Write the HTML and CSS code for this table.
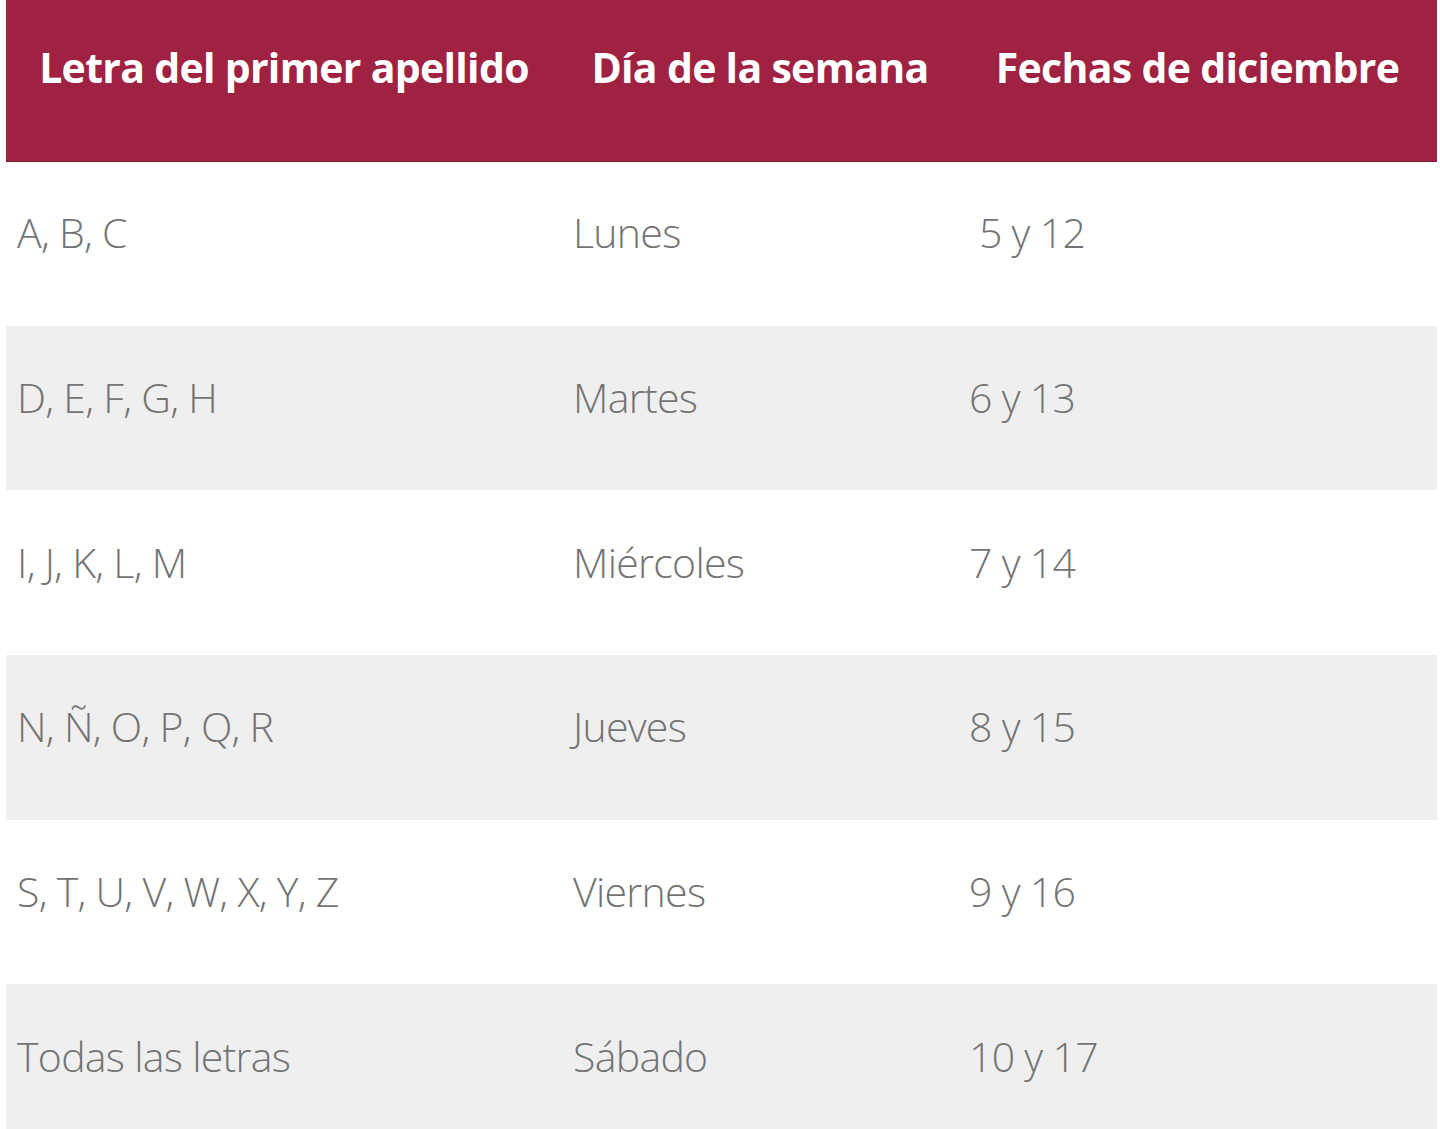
FILE: index.html
```html
<!DOCTYPE html>
<html lang="es">
<head>
<meta charset="utf-8">
<title>Calendario por apellido</title>
<link rel="stylesheet" href="styles.css">
</head>
<body>
<table class="schedule">
  <colgroup>
    <col class="c1"><col class="c2"><col class="c3">
  </colgroup>
  <thead>
    <tr>
      <th><span class="txt">Letra del primer apellido</span></th>
      <th><span class="txt">Día de la semana</span></th>
      <th><span class="txt">Fechas de diciembre</span></th>
    </tr>
  </thead>
  <tbody>
    <tr><td><span class="txt">A, B, C</span></td><td><span class="txt">Lunes</span></td><td><span class="txt">&nbsp;5 y 12</span></td></tr>
    <tr><td><span class="txt">D, E, F, G, H</span></td><td><span class="txt">Martes</span></td><td><span class="txt">6 y 13</span></td></tr>
    <tr><td><span class="txt">I, J, K, L, M</span></td><td><span class="txt">Miércoles</span></td><td><span class="txt">7 y 14</span></td></tr>
    <tr><td><span class="txt">N, Ñ, O, P, Q, R</span></td><td><span class="txt">Jueves</span></td><td><span class="txt">8 y 15</span></td></tr>
    <tr><td><span class="txt">S, T, U, V, W, X, Y, Z</span></td><td><span class="txt">Viernes</span></td><td><span class="txt">9 y 16</span></td></tr>
    <tr><td><span class="txt">Todas las letras</span></td><td><span class="txt">Sábado</span></td><td><span class="txt">10 y 17</span></td></tr>
  </tbody>
</table>
</body>
</html>
```

FILE: styles.css
```css
html, body {
  margin: 0;
  padding: 0;
  background: #ffffff;
}
body {
  padding-left: 6px;
  font-family: "Open Sans", "Liberation Sans", sans-serif;
}
.schedule {
  width: 1431px;
  border-collapse: collapse;
  table-layout: fixed;
}
.c1 { width: 556px; }
.c2 { width: 396px; }
.c3 { width: 479px; }
.schedule th {
  height: 161px;
  background: #a02242;
  color: #ffffff;
  font-weight: 700;
  font-size: 41px;
  letter-spacing: -0.7px;
  text-align: center;
  vertical-align: middle;
  padding: 0 0 28px 0;
  box-sizing: border-box;
  box-shadow: 0 1px 0 #7d1830;
}
.schedule td {
  height: 164.7px;
  color: #737373;
  font-weight: 300;
  font-size: 41px;
  letter-spacing: -0.7px;
  text-align: left;
  vertical-align: middle;
  padding: 0 0 22px 11px;
  box-sizing: border-box;
}
.schedule tbody tr:nth-child(even) td {
  background: #efefef;
}
.txt {
  display: inline-block;
  white-space: nowrap;
}
```
